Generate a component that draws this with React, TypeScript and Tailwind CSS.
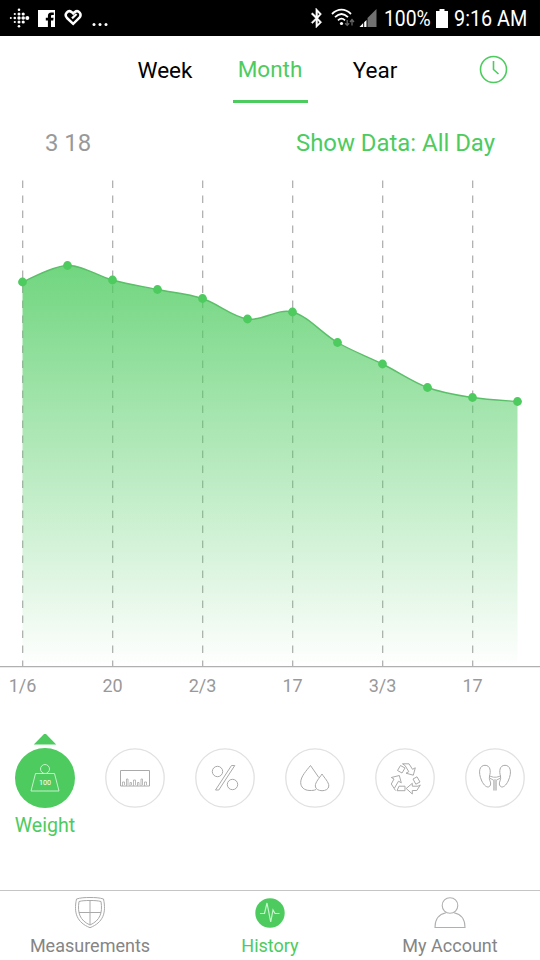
import React from "react";
import { FaBluetoothB } from "react-icons/fa";

const points = [282, 265.5, 280, 289.5, 298.5, 319, 312, 342.5, 364, 387.5, 397.5, 401.5].map(
  (y, i) => ({ x: 22.5 + i * 45, y: y - 174 })
);

const axisLabels = ["1/6", "20", "2/3", "17", "3/3", "17"];

const smoothLine = () => {
  const k = 0.17;
  let d = `M${points[0].x} ${points[0].y}`;
  for (let i = 1; i < points.length; i++) {
    const before = points[Math.max(i - 2, 0)];
    const from = points[i - 1];
    const to = points[i];
    const after = points[Math.min(i + 1, points.length - 1)];
    d += ` C${from.x + (to.x - before.x) * k} ${from.y + (to.y - before.y) * k}`;
    d += ` ${to.x - (after.x - from.x) * k} ${to.y - (after.y - from.y) * k} ${to.x} ${to.y}`;
  }
  return d;
};

const StatusBar: React.FC = () => (
  <header className="flex h-9 items-center justify-between bg-black pr-[13px] pl-[9px] text-white">
    <div className="flex items-center">
      <svg width="21" height="20" viewBox="0 0 21 20" fill="white">
        {[
          [1.8, 10, 1],
          [5.8, 6, 1.1], [5.8, 10, 1.3], [5.8, 14, 1.1],
          [10, 1.8, 1.3], [10, 6, 1.5], [10, 10, 1.7], [10, 14, 1.5], [10, 18.2, 1.3],
          [14.2, 6, 1.6], [14.2, 10, 1.8], [14.2, 14, 1.6],
          [18.3, 10, 2],
        ].map(([cx, cy, r], i) => (
          <circle key={i} cx={cx} cy={cy} r={r} />
        ))}
      </svg>
      <svg className="ml-2" width="17" height="17" viewBox="0 0 17 17">
        <path fill="white" d="M0 0H17V17H13V10.5H15.2L15.6 7.8H13V6.4C13 5.5 13.3 5 14.4 5H15.8V2.5H13.3C10.9 2.5 9.9 4 9.9 6V7.8H7.8V10.5H9.9V17H0Z" />
      </svg>
      <svg className="ml-[9px]" width="19" height="18" viewBox="0 0 19 18" fill="none" stroke="white" strokeWidth="2.5">
        <path d="M9.2 14.8L3 9C-.5 5.2 4.2 .2 7.8 3.2L9.2 4.5L10.6 3.2C14.3 .2 18.6 5.2 15.2 9Z" />
        <path d="M8 9.4L12.6 5" strokeWidth="2.2" />
      </svg>
      <svg className="ml-[9px]" width="17" height="18" viewBox="0 0 17 18" fill="white">
        <circle cx="2" cy="15.5" r="1.5" />
        <circle cx="8" cy="15.5" r="1.5" />
        <circle cx="14" cy="15.5" r="1.5" />
      </svg>
    </div>
    <div className="flex items-center">
      <FaBluetoothB className="h-5 w-[15px] stroke-white stroke-[10px]" />
      <svg className="ml-[7px]" width="24" height="20" viewBox="0 0 24 20" fill="none" stroke="white" strokeWidth="1.8">
        <path d="M1 6C6.8 .2 14.2 .2 20 6M4 9.2C8.2 5 12.8 5 17 9.2M7 12.3C9.4 10 11.6 10 14 12.3" />
        <circle cx="10.5" cy="15.5" r="1.6" fill="white" stroke="none" />
        <path d="M16.2 12V17M14.2 15.2L16.2 17.4L18.2 15.2M21 17.5V12M19 14L21 11.6L23 14" stroke="#666" strokeWidth="1.3" />
      </svg>
      <svg className="ml-[4px]" width="19" height="19" viewBox="0 0 19 19">
        <path d="M17.5 0V18H8.5V9Z" fill="#717171" />
        <path d="M7.5 11V18H5.2V13.3ZM4.2 14V18H.5Z" fill="white" />
      </svg>
      <span className="ml-[6px] w-[48px] text-[22.5px] leading-9 whitespace-nowrap">
        <span className="inline-block origin-left scale-x-[.86]">100%</span>
      </span>
      <svg className="ml-[4px]" width="12" height="19" viewBox="0 0 12 19" fill="white">
        <path d="M3.5 0H8.5V2H12V19H0V2H3.5Z" />
      </svg>
      <span className="ml-[6px] w-[73px] text-[22.5px] leading-9 whitespace-nowrap">
        <span className="inline-block origin-left scale-x-[.88]">9:16 AM</span>
      </span>
    </div>
  </header>
);

const Tabs: React.FC = () => (
  <nav className="flex h-[68px] pl-[120px] text-[22.5px]">
    <button className="w-[90px] pt-[2px] text-black">Week</button>
    <div className="flex w-[120px] justify-center">
      <button className="h-[67px] w-[75px] border-b-[3px] border-[#4dcb5f] pt-[3px] text-[#4dcb5f]">Month</button>
    </div>
    <button className="w-[90px] pt-[2px] text-black">Year</button>
    <svg className="mt-[19px] ml-[59px]" width="30" height="30" viewBox="0 0 30 30" fill="none" stroke="#4dcb5f" strokeWidth="1.6">
      <circle cx="14.5" cy="14.5" r="13" />
      <path d="M14.5 6V14.5L19.5 19" />
    </svg>
  </nav>
);

const Chart: React.FC = () => {
  const line = smoothLine();
  return (
    <section className="h-[526px]">
      <svg className="block" width="540" height="494" viewBox="0 0 540 494" fill="none">
        <defs>
          <linearGradient id="weightFill" gradientUnits="userSpaceOnUse" x1="0" y1="91" x2="0" y2="493">
            <stop offset="0" stopColor="#4dcb5f" stopOpacity="0.8" />
            <stop offset="1" stopColor="#4dcb5f" stopOpacity="0" />
          </linearGradient>
        </defs>
        {axisLabels.map((_, i) => (
          <path key={i} d={`M${22.7 + i * 90} 6.5V492`} stroke="#aaa" strokeWidth="1.2" strokeDasharray="7.5 7.5" />
        ))}
        <path d={`${line} V493 H22.5Z`} fill="url(#weightFill)" />
        <path d={line} stroke="#5abf68" strokeWidth="1.4" />
        {points.map((p) => (
          <circle key={p.x} cx={p.x} cy={p.y} r="4.4" fill="#4dcb5f" />
        ))}
        <path d="M0 492.7H540" stroke="#b0b0b0" strokeWidth="1.2" />
      </svg>
      <div className="-ml-[22.5px] flex text-center text-[18px] leading-[35px] text-[#999]">
        {axisLabels.map((label, i) => (
          <span key={i} className="w-[90px] shrink-0">
            {label}
          </span>
        ))}
      </div>
    </section>
  );
};

const metrics = [
  {
    name: "Weight",
    icon: (
      <>
        <circle cx="30" cy="21" r="4.5" />
        <path d="M20.5 25.5H39.5L44 43H16Z" />
        <text x="30" y="37" textAnchor="middle" fontSize="7.2" fill="white" stroke="none">100</text>
      </>
    ),
  },
  {
    name: "Size",
    icon: (
      <>
        <path d="M15.5 22.5H44.5V38H15.5Z" />
        <path d="M17.5 38V34H19.5V37M21.5 38V31H23V37M25 38V34.5H26.5V37M28.5 38V32H30.5V37M32.5 38V34.5H34V37M36 38V31H37.5V37M39.5 38V34H41.5V37" strokeWidth=".8" />
      </>
    ),
  },
  {
    name: "Body fat",
    icon: (
      <>
        <circle cx="22.5" cy="23.5" r="5.2" />
        <circle cx="37.5" cy="36.5" r="5.2" />
        <path d="M36.5 17.5H39.8L23.8 42H20.5Z" />
      </>
    ),
  },
  {
    name: "Water",
    icon: (
      <>
        <path d="M31 41.5C29 42.5 27 42.5 25 42.5C19 42.5 15.7 39 15.7 34.5C15.7 28.5 21.5 22.5 25.5 17.5L33.8 29.5" />
        <path d="M37 26C34.5 30 30.3 34 30.3 38C30.3 44.3 43.8 44.3 43.8 38C43.8 34 39.5 30 37 26Z" />
      </>
    ),
  },
  {
    name: "Metabolism",
    icon: (
      <>
        <path d="M25.5 17.5L30 20L27 25L22.5 22.5Z" />
        <path d="M27.5 15.8H34L37.5 21.3L40.3 19.8L38.3 27.2L31 25.2L33.8 23.7L30 17.5Z" />
        <path d="M38 31L42 28.8L45 34L40.8 36.2Z" />
        <path d="M45.3 37L41.8 42.5H37.3V46L31.2 40.5L37.3 35.3V38.2H43Z" />
        <path d="M24 38.2H30V42.7H22Z" />
        <path d="M20.5 42.5L16.3 36L19 31L16.3 29.5L24.3 27.5L26.3 34.8L23.5 33.2L19.5 40" />
      </>
    ),
  },
  {
    name: "Kidneys",
    icon: (
      <>
        <path d="M24.5 28C23.5 32 26.5 34 25.5 37C24 40.5 20 39.5 16.8 33C12.5 23.5 14.8 17.3 20 17.3C25.5 17.3 26 23.5 24.5 28Z" />
        <path d="M35.5 28C36.5 32 33.5 34 34.5 37C36 40.5 40 39.5 43.2 33C47.5 23.5 45.2 17.3 40 17.3C34.5 17.3 34 23.5 35.5 28Z" />
        <path d="M24.5 28L28.5 29.2H31.5L35.5 28M24.5 30L28.8 32.3V42.5M35.5 30L31.2 32.3V42.5M30 31V42.5" strokeWidth=".9" />
      </>
    ),
  },
];

const Metrics: React.FC = () => (
  <section className="flex h-[160px] pt-1">
    {metrics.map(({ name, icon }, i) => (
      <div key={name} className="flex w-[90px] flex-col items-center">
        <svg width="24" height="14" viewBox="0 0 24 14">
          {i === 0 && <path d="M12 -1L23.2 10.5H.8Z" fill="#4dcb5f" />}
        </svg>
        <svg width="60" height="60" viewBox="0 0 60 60" fill="none" stroke={i === 0 ? "#c6f0cc" : "#aaa"} strokeWidth="1">
          <circle cx="30" cy="30" r={i === 0 ? 30 : 29.2} fill={i === 0 ? "#4dcb5f" : "white"} stroke={i === 0 ? "none" : "#e1e1e1"} strokeWidth="1.3" />
          {icon}
        </svg>
        {i === 0 && <span className="mt-[4px] text-[19.6px] leading-7 text-[#4dcb5f]">{name}</span>}
      </div>
    ))}
  </section>
);

const BottomNav: React.FC = () => (
  <footer className="flex h-[70px] border-t border-[#c5c5c5] pt-[5px] text-[18px] text-[#858585]">
    <div className="flex w-[180px] flex-col items-center">
      <svg className="shrink-0" width="34" height="34" viewBox="0 0 34 34" fill="none" stroke="#aaa">
        <path d="M17 1.5C12 1.5 7.5 1.7 3.5 3C.5 17 4 26.5 17 31.7C30 26.5 33.5 17 30.5 3C26.5 1.7 22 1.5 17 1.5Z" />
        <path d="M17 4.5C12.5 4.5 9 4.7 6 5.5C4.2 17 7 24.5 17 29C27 24.5 29.8 17 28 5.5C25 4.7 21.5 4.5 17 4.5ZM17 4.5V29M6 16.5H28" />
      </svg>
      <span className="leading-[32px]">Measurements</span>
    </div>
    <div className="flex w-[180px] flex-col items-center text-[#4dcb5f]">
      <svg className="shrink-0" width="34" height="34" viewBox="0 0 34 34" fill="none">
        <circle cx="17" cy="17" r="14.7" fill="#4dcb5f" />
        <path d="M7 17.5H11.5L14 7L17.7 26L20 14L22 17.5H26.5" stroke="#c8f3cf" strokeWidth="1.2" />
      </svg>
      <span className="leading-[32px]">History</span>
    </div>
    <div className="flex w-[180px] flex-col items-center">
      <svg className="shrink-0" width="34" height="34" viewBox="0 0 34 34" fill="none" stroke="#b0b0b0" strokeWidth="1.1">
        <circle cx="17" cy="9.5" r="7.8" />
        <path d="M13 16.7C6 18 2 23 2 31.5H32C32 23 28 18 21 16.7" />
      </svg>
      <span className="leading-[32px]">My Account</span>
    </div>
  </footer>
);

const App: React.FC = () => {
  return (
    <main className="h-[960px] w-[540px] overflow-hidden bg-white font-[Roboto,sans-serif]">
      <StatusBar />
      <Tabs />
      <div className="flex h-[70px] justify-between px-[45px] pt-[21px] text-[23.9px] leading-9">
        <span className="text-[#999]">3 18</span>
        <span className="text-[#4dcb5f]">Show Data: All Day</span>
      </div>
      <Chart />
      <div className="h-[30px]" />
      <Metrics />
      <BottomNav />
    </main>
  );
};

export default App;
